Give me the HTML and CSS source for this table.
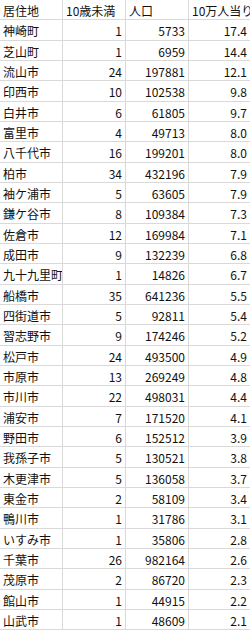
FILE: index.html
```html
<!DOCTYPE html>
<html lang="ja">
<head>
<meta charset="utf-8">
<link rel="stylesheet" href="styles.css">
</head>
<body>
<div class="sheet">
  <div class="cell">居住地</div><div class="cell">10歳未満</div><div class="cell">人口</div><div class="cell">10万人当り</div>
  <div class="cell">神崎町</div><div class="cell num">1</div><div class="cell num">5733</div><div class="cell num">17.4</div>
  <div class="cell">芝山町</div><div class="cell num">1</div><div class="cell num">6959</div><div class="cell num">14.4</div>
  <div class="cell">流山市</div><div class="cell num">24</div><div class="cell num">197881</div><div class="cell num">12.1</div>
  <div class="cell">印西市</div><div class="cell num">10</div><div class="cell num">102538</div><div class="cell num">9.8</div>
  <div class="cell">白井市</div><div class="cell num">6</div><div class="cell num">61805</div><div class="cell num">9.7</div>
  <div class="cell">富里市</div><div class="cell num">4</div><div class="cell num">49713</div><div class="cell num">8.0</div>
  <div class="cell">八千代市</div><div class="cell num">16</div><div class="cell num">199201</div><div class="cell num">8.0</div>
  <div class="cell">柏市</div><div class="cell num">34</div><div class="cell num">432196</div><div class="cell num">7.9</div>
  <div class="cell">袖ケ浦市</div><div class="cell num">5</div><div class="cell num">63605</div><div class="cell num">7.9</div>
  <div class="cell">鎌ケ谷市</div><div class="cell num">8</div><div class="cell num">109384</div><div class="cell num">7.3</div>
  <div class="cell">佐倉市</div><div class="cell num">12</div><div class="cell num">169984</div><div class="cell num">7.1</div>
  <div class="cell">成田市</div><div class="cell num">9</div><div class="cell num">132239</div><div class="cell num">6.8</div>
  <div class="cell">九十九里町</div><div class="cell num">1</div><div class="cell num">14826</div><div class="cell num">6.7</div>
  <div class="cell">船橋市</div><div class="cell num">35</div><div class="cell num">641236</div><div class="cell num">5.5</div>
  <div class="cell">四街道市</div><div class="cell num">5</div><div class="cell num">92811</div><div class="cell num">5.4</div>
  <div class="cell">習志野市</div><div class="cell num">9</div><div class="cell num">174246</div><div class="cell num">5.2</div>
  <div class="cell">松戸市</div><div class="cell num">24</div><div class="cell num">493500</div><div class="cell num">4.9</div>
  <div class="cell">市原市</div><div class="cell num">13</div><div class="cell num">269249</div><div class="cell num">4.8</div>
  <div class="cell">市川市</div><div class="cell num">22</div><div class="cell num">498031</div><div class="cell num">4.4</div>
  <div class="cell">浦安市</div><div class="cell num">7</div><div class="cell num">171520</div><div class="cell num">4.1</div>
  <div class="cell">野田市</div><div class="cell num">6</div><div class="cell num">152512</div><div class="cell num">3.9</div>
  <div class="cell">我孫子市</div><div class="cell num">5</div><div class="cell num">130521</div><div class="cell num">3.8</div>
  <div class="cell">木更津市</div><div class="cell num">5</div><div class="cell num">136058</div><div class="cell num">3.7</div>
  <div class="cell">東金市</div><div class="cell num">2</div><div class="cell num">58109</div><div class="cell num">3.4</div>
  <div class="cell">鴨川市</div><div class="cell num">1</div><div class="cell num">31786</div><div class="cell num">3.1</div>
  <div class="cell">いすみ市</div><div class="cell num">1</div><div class="cell num">35806</div><div class="cell num">2.8</div>
  <div class="cell">千葉市</div><div class="cell num">26</div><div class="cell num">982164</div><div class="cell num">2.6</div>
  <div class="cell">茂原市</div><div class="cell num">2</div><div class="cell num">86720</div><div class="cell num">2.3</div>
  <div class="cell">館山市</div><div class="cell num">1</div><div class="cell num">44915</div><div class="cell num">2.2</div>
  <div class="cell">山武市</div><div class="cell num">1</div><div class="cell num">48609</div><div class="cell num">2.1</div>
</div>
</body>
</html>
```

FILE: styles.css
```css
html, body {
  margin: 0;
  padding: 0;
  background: #ffffff;
  overflow: hidden;
}

.sheet {
  display: grid;
  grid-template-columns: 63px 63px 63px 62px;
  grid-auto-rows: 20.333px;
  width: 251px;
  font-family: "Noto Sans CJK JP", "Noto Sans", sans-serif;
  font-size: 12px;
  color: #111111;
}

.cell {
  box-sizing: border-box;
  border-right: 1px solid #d9d9d9;
  border-bottom: 1px solid #d9d9d9;
  padding: 2px 3px 0 3px;
  line-height: 17px;
  white-space: nowrap;
  overflow: hidden;
}

.num {
  text-align: right;
}
```
